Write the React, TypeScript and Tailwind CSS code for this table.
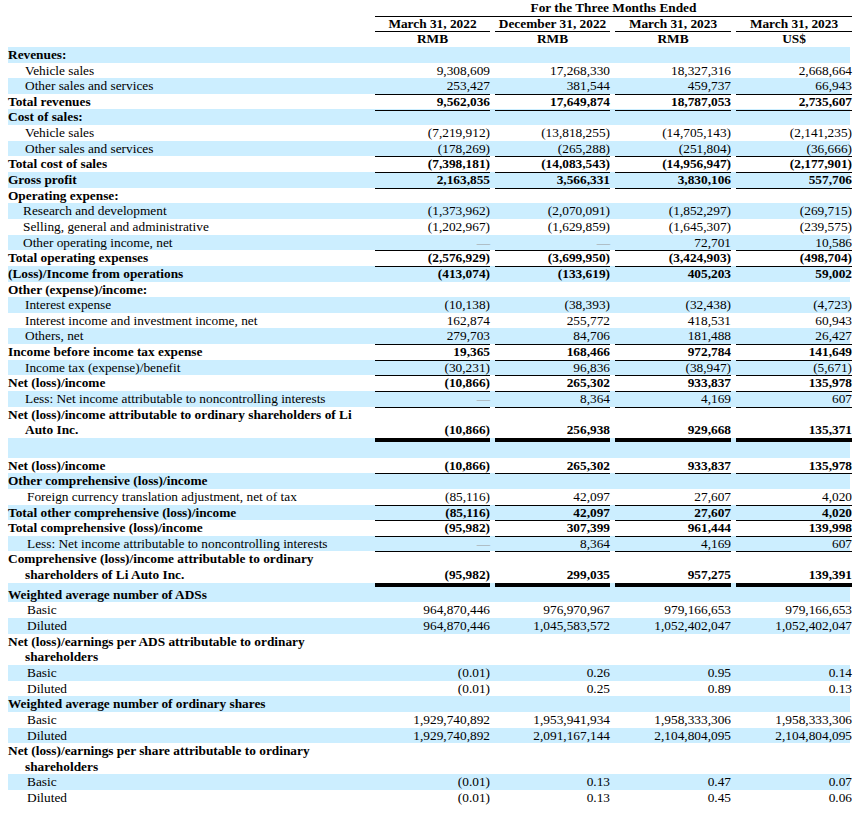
import React from 'react';

type Row = {
  label: string | [string, string];
  values?: string[];
  bold?: boolean;
  indent?: string;
  under?: boolean;
  thick?: boolean;
};

const A = 'pl-[17px]';
const B = 'pl-[15px]';
const C = 'pl-[19px]';

const rows: Row[] = [
  { label: 'Revenues:', bold: true },
  { label: 'Vehicle sales', indent: A, values: ['9,308,609', '17,268,330', '18,327,316', '2,668,664'] },
  { label: 'Other sales and services', indent: A, values: ['253,427', '381,544', '459,737', '66,943'], under: true },
  { label: 'Total revenues', bold: true, values: ['9,562,036', '17,649,874', '18,787,053', '2,735,607'], under: true },
  { label: 'Cost of sales:', bold: true },
  { label: 'Vehicle sales', indent: A, values: ['(7,219,912)', '(13,818,255)', '(14,705,143)', '(2,141,235)'] },
  { label: 'Other sales and services', indent: A, values: ['(178,269)', '(265,288)', '(251,804)', '(36,666)'], under: true },
  { label: 'Total cost of sales', bold: true, values: ['(7,398,181)', '(14,083,543)', '(14,956,947)', '(2,177,901)'], under: true },
  { label: 'Gross profit', bold: true, values: ['2,163,855', '3,566,331', '3,830,106', '557,706'], under: true },
  { label: 'Operating expense:', bold: true },
  { label: 'Research and development', indent: B, values: ['(1,373,962)', '(2,070,091)', '(1,852,297)', '(269,715)'] },
  { label: 'Selling, general and administrative', indent: B, values: ['(1,202,967)', '(1,629,859)', '(1,645,307)', '(239,575)'] },
  { label: 'Other operating income, net', indent: B, values: ['—', '—', '72,701', '10,586'], under: true },
  { label: 'Total operating expenses', bold: true, values: ['(2,576,929)', '(3,699,950)', '(3,424,903)', '(498,704)'], under: true },
  { label: '(Loss)/Income from operations', bold: true, values: ['(413,074)', '(133,619)', '405,203', '59,002'] },
  { label: 'Other (expense)/income:', bold: true },
  { label: 'Interest expense', indent: A, values: ['(10,138)', '(38,393)', '(32,438)', '(4,723)'] },
  { label: 'Interest income and investment income, net', indent: A, values: ['162,874', '255,772', '418,531', '60,943'] },
  { label: 'Others, net', indent: A, values: ['279,703', '84,706', '181,488', '26,427'], under: true },
  { label: 'Income before income tax expense', bold: true, values: ['19,365', '168,466', '972,784', '141,649'], under: true },
  { label: 'Income tax (expense)/benefit', indent: A, values: ['(30,231)', '96,836', '(38,947)', '(5,671)'], under: true },
  { label: 'Net (loss)/income', bold: true, values: ['(10,866)', '265,302', '933,837', '135,978'], under: true },
  { label: 'Less: Net income attributable to noncontrolling interests', indent: A, values: ['—', '8,364', '4,169', '607'], under: true },
  { label: ['Net (loss)/income attributable to ordinary shareholders of Li', 'Auto Inc.'], bold: true, values: ['(10,866)', '256,938', '929,668', '135,371'] },
  { label: '', thick: true },
  { label: 'Net (loss)/income', bold: true, values: ['(10,866)', '265,302', '933,837', '135,978'], under: true },
  { label: 'Other comprehensive (loss)/income', bold: true },
  { label: 'Foreign currency translation adjustment, net of tax', indent: C, values: ['(85,116)', '42,097', '27,607', '4,020'], under: true },
  { label: 'Total other comprehensive (loss)/income', bold: true, values: ['(85,116)', '42,097', '27,607', '4,020'], under: true },
  { label: 'Total comprehensive (loss)/income', bold: true, values: ['(95,982)', '307,399', '961,444', '139,998'], under: true },
  { label: 'Less: Net income attributable to noncontrolling interests', indent: C, values: ['—', '8,364', '4,169', '607'], under: true },
  { label: ['Comprehensive (loss)/income attributable to ordinary', 'shareholders of Li Auto Inc.'], bold: true, values: ['(95,982)', '299,035', '957,275', '139,391'] },
  { label: 'Weighted average number of ADSs', bold: true, thick: true },
  { label: 'Basic', indent: C, values: ['964,870,446', '976,970,967', '979,166,653', '979,166,653'] },
  { label: 'Diluted', indent: C, values: ['964,870,446', '1,045,583,572', '1,052,402,047', '1,052,402,047'] },
  { label: ['Net (loss)/earnings per ADS attributable to ordinary', 'shareholders'], bold: true },
  { label: 'Basic', indent: C, values: ['(0.01)', '0.26', '0.95', '0.14'] },
  { label: 'Diluted', indent: C, values: ['(0.01)', '0.25', '0.89', '0.13'] },
  { label: 'Weighted average number of ordinary shares', bold: true },
  { label: 'Basic', indent: C, values: ['1,929,740,892', '1,953,941,934', '1,958,333,306', '1,958,333,306'] },
  { label: 'Diluted', indent: C, values: ['1,929,740,892', '2,091,167,144', '2,104,804,095', '2,104,804,095'] },
  { label: ['Net (loss)/earnings per share attributable to ordinary', 'shareholders'], bold: true },
  { label: 'Basic', indent: C, values: ['(0.01)', '0.13', '0.47', '0.07'] },
  { label: 'Diluted', indent: C, values: ['(0.01)', '0.13', '0.45', '0.06'] },
];

const grid = 'grid grid-cols-[362px_115px_115px_116px_116px] gap-x-[5px]';

const headers = [
  ['March 31, 2022', 'RMB'],
  ['December 31, 2022', 'RMB'],
  ['March 31, 2023', 'RMB'],
  ['March 31, 2023', 'US$'],
];

function StatementRow({ row, index }: { row: Row; index: number }) {
  const twoLines = Array.isArray(row.label);
  const height = twoLines ? 'h-[31.3px]' : row.thick ? 'h-[19.65px]' : 'h-[15.65px]';
  const shade = index % 2 === 0 ? 'bg-[#cceeff]' : 'bg-white';

  return (
    <div className={`${grid} ${height} ${shade} pr-[3px]`}>
      <div className={`${row.bold ? 'font-bold' : ''} ${row.indent ?? ''} ${row.thick ? 'pt-[4px]' : ''} whitespace-nowrap`}>
        {twoLines ? (
          <>
            <div>{row.label[0]}</div>
            <div className="pl-[17px]">{row.label[1]}</div>
          </>
        ) : (
          row.label
        )}
      </div>
      {[0, 1, 2, 3].map((i) => {
        const v = row.values?.[i];
        return (
          <div
            key={i}
            className={`flex items-end justify-end ${row.bold ? 'font-bold' : ''} ${row.under ? 'border-b border-black' : ''} ${row.thick ? 'border-t-4 border-black' : ''}`}
          >
            {v === '—' ? <span className="text-[#9a9a9a]">—</span> : v}
          </div>
        );
      })}
    </div>
  );
}

export default function App() {
  return (
    <div className="bg-white min-h-[814px] w-[856px] font-['Liberation_Serif',serif] text-[13.33px] leading-[15.65px] text-black">
      <div className="ml-[8px] w-[842px]">
        {/* Column headers */}
        <div className={`${grid} h-[15.65px] pr-[3px] font-bold`}>
          <div />
          <div className="col-span-4 border-b border-black text-center">For the Three Months Ended</div>
        </div>
        <div className={`${grid} h-[15.65px] pr-[3px] font-bold`}>
          <div />
          {headers.map(([date], i) => (
            <div key={i} className="border-b border-black text-center whitespace-nowrap">
              {date}
            </div>
          ))}
        </div>
        <div className={`${grid} h-[15.65px] pr-[3px] font-bold`}>
          <div />
          {headers.map(([, cur], i) => (
            <div key={i} className="text-center">
              {cur}
            </div>
          ))}
        </div>

        {rows.map((row, i) => (
          <StatementRow key={i} row={row} index={i} />
        ))}
      </div>
    </div>
  );
}
